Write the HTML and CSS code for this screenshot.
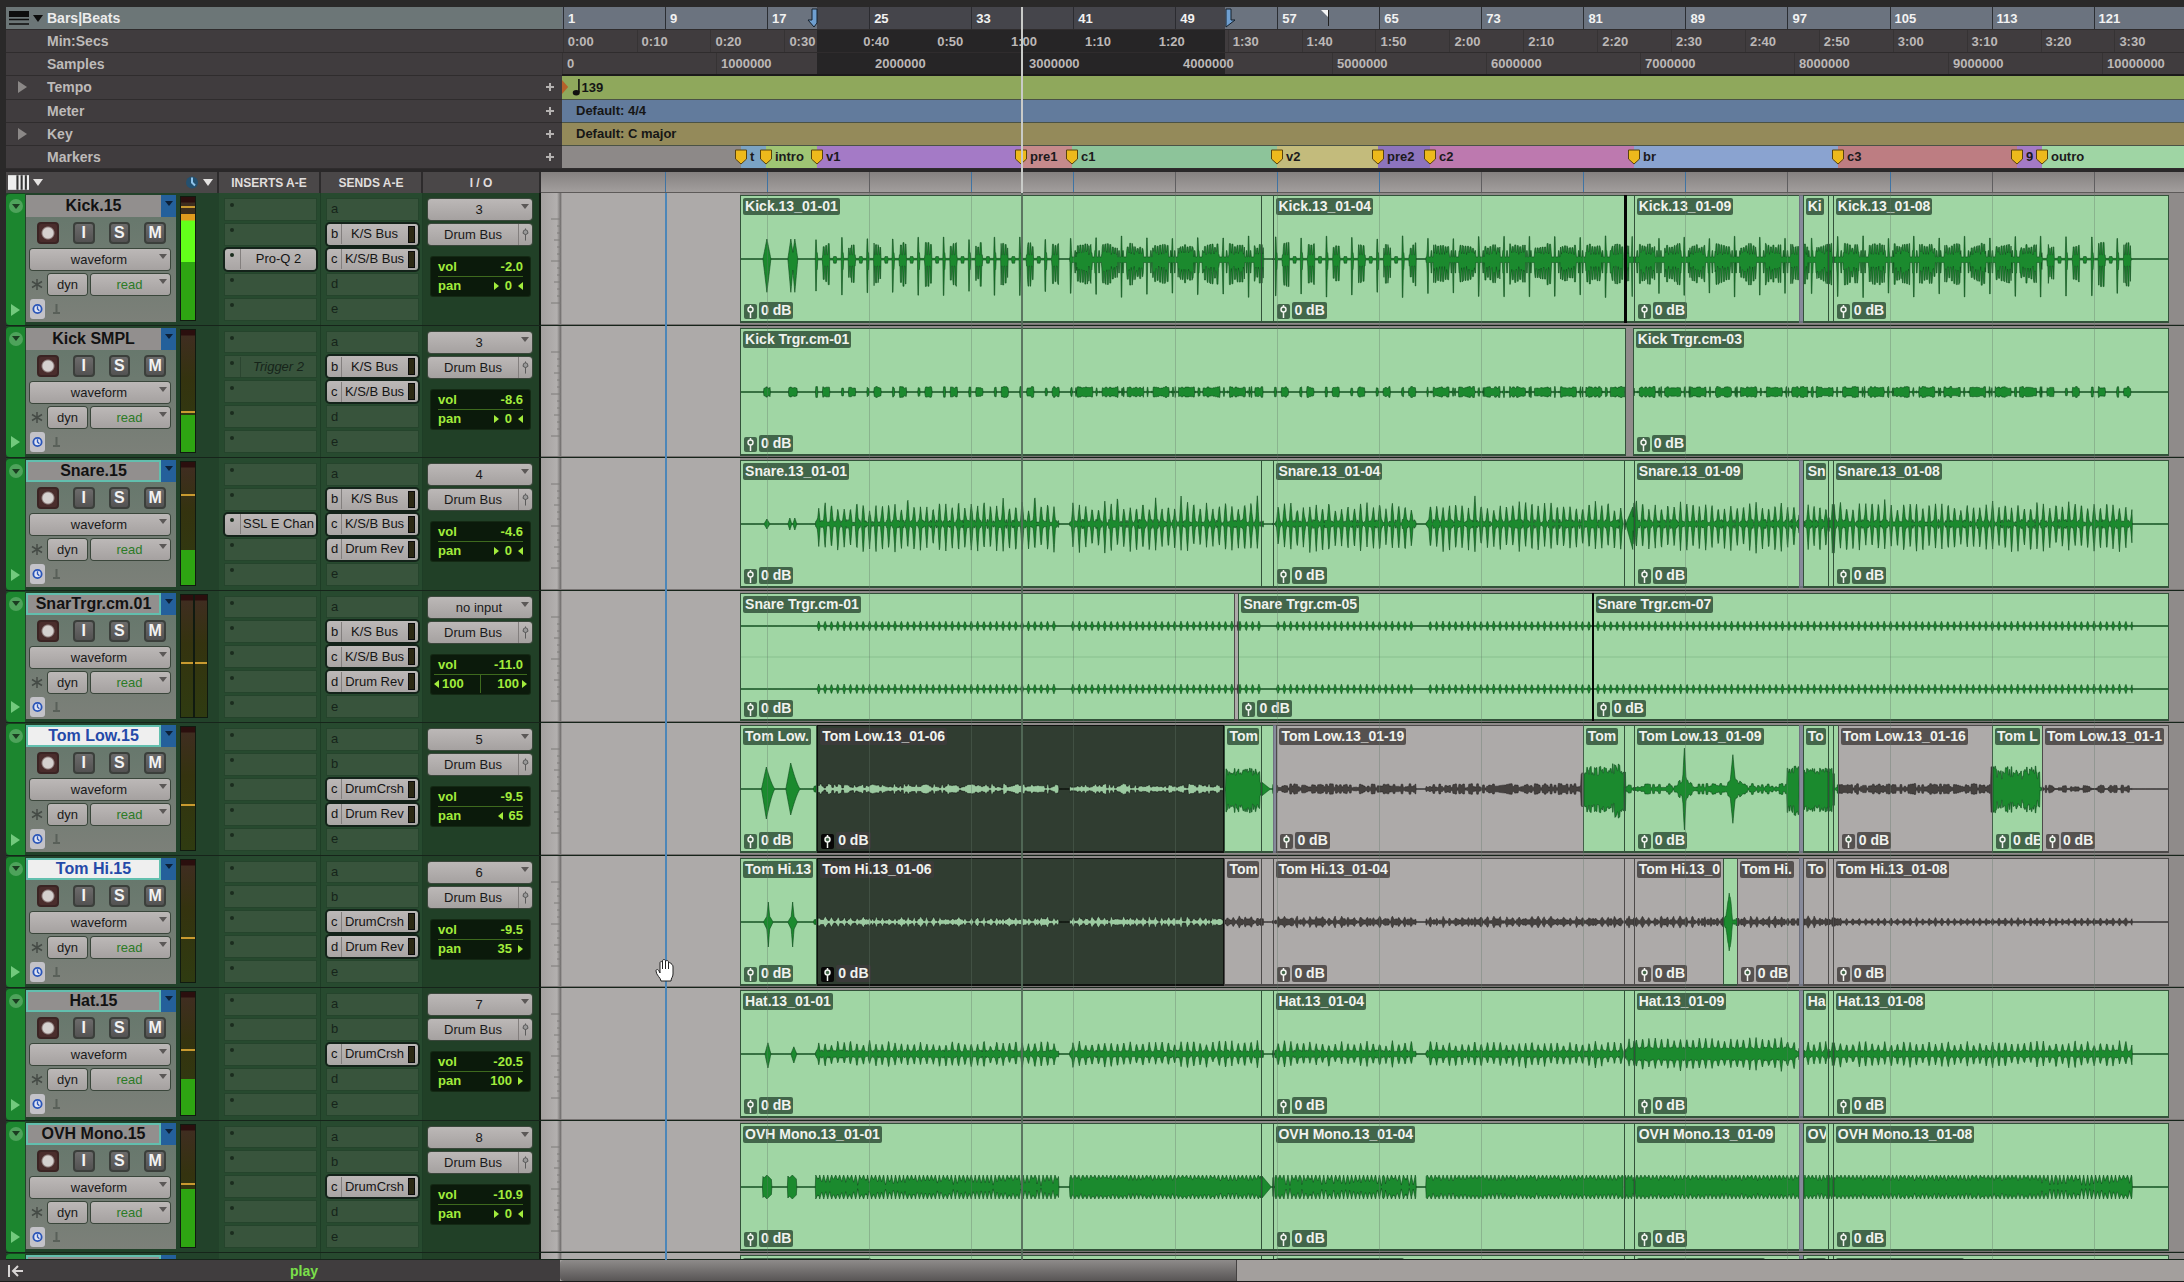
FILE: index.html
```
<!DOCTYPE html>
<html lang="en">
<head>
    <meta charset="UTF-8">
    <meta name="viewport" content="width=device-width, initial-scale=1.0">
    <title>Edit Window</title>
    <link rel="stylesheet" href="styles.css">
</head>
<body>
    <!-- Rulers -->
    <section class="rulers">
        <div class="ruler-names">
            <div class="ruler-name main">
                <svg class="list-icon" viewBox="0 0 20 14"><rect width="20" height="6" fill="#0d0d0d"/><path d="M0 8.5h20M0 13h20" stroke="#0d0d0d" stroke-width="1.5"/></svg>
                <span class="arrow-down black"></span>
                <span class="text">Bars|Beats</span>
            </div>
            <div class="ruler-name"><span class="text">Min:Secs</span></div>
            <div class="ruler-name"><span class="text">Samples</span></div>
            <div class="ruler-name"><span class="arrow-right"></span><span class="text">Tempo</span><button class="plus" aria-label="Add tempo change"></button></div>
            <div class="ruler-name"><span class="text">Meter</span><button class="plus" aria-label="Add meter change"></button></div>
            <div class="ruler-name"><span class="arrow-right"></span><span class="text">Key</span><button class="plus" aria-label="Add key change"></button></div>
            <div class="ruler-name"><span class="text">Markers</span><button class="plus" aria-label="Add marker"></button></div>
        </div>
        <div class="ruler-lanes">
            <div class="ruler bars" id="bars"></div>
            <div class="ruler" id="secs"></div>
            <div class="ruler samples" id="samples"></div>
            <div class="ruler tempo">
                <svg class="tempo-start" viewBox="0 0 8 16"><path d="M0 0l7 8-7 8z" fill="#b5602a"/></svg>
                <svg class="note" viewBox="0 0 8 16"><path d="M6.5 0v12.5" stroke="#111" stroke-width="1.5"/><ellipse cx="4" cy="13" rx="3.3" ry="2.6" fill="#111"/></svg>139
            </div>
            <div class="ruler meter-ruler">Default: 4/4</div>
            <div class="ruler key">Default: C major</div>
            <div class="ruler markers" id="markers"></div>
        </div>
    </section>

    <!-- Column titles -->
    <header class="columns">
        <div class="view-cell">
            <button class="view-button" aria-label="Edit window views">
                <svg viewBox="0 0 20 14"><rect width="20" height="14" fill="#eee"/><path d="M9 0v14M13 0v14M17 0v14" stroke="#333" stroke-width="2"/></svg>
                <span class="arrow-down"></span>
            </button>
            <button class="view-button" aria-label="Timebase">
                <svg class="clock-big" viewBox="0 0 14 14"><circle cx="7" cy="7" r="6" fill="#24506f"/><path d="M7 2v5l3 3" stroke="#8fc3ea" stroke-width="2" fill="none"/></svg>
                <span class="arrow-down"></span>
            </button>
        </div>
        <div>INSERTS A-E</div>
        <div>SENDS A-E</div>
        <div>I / O</div>
        <div class="lane-top" id="lane-top"></div>
    </header>

    <main class="tracks" id="tracks"></main>

    <footer>
        <div class="status">
            <svg viewBox="0 0 16 12"><path d="M1 0v12M15 6H5M10 1L5 6l5 5" stroke="#d8d5d4" stroke-width="2" fill="none"/></svg>
            <span>play</span>
        </div>
        <div class="scroll"><div class="thumb"></div></div>
    </footer>

    <script src="tracks.js"></script>
</body>
</html>
```
FILE: styles.css
```
* {
    box-sizing: border-box;
}
body {
    margin: 0;
    height: 100vh;
    display: flex;
    flex-direction: column;
    overflow: hidden;
    background: #2a2929;
    font-family: "Liberation Sans", Arial, sans-serif;
    font-size: 13px;
    padding-top: 7px;
}
button, select {
    font: inherit;
    color: inherit;
    border: 0;
    margin: 0;
    padding: 0;
    background: none;
    appearance: none;
}
svg {
    display: block;
}

/* small shared arrows */
.arrow-down {
    border: 5px solid transparent;
    border-top: 7px solid #e4e2e1;
    border-bottom: 0;
}
.arrow-down.black {
    border-top-color: #0d0d0d;
}
.arrow-right {
    border: 6px solid transparent;
    border-left: 9px solid #8b8887;
    border-right: 0;
}

/* rulers */
.rulers {
    display: grid;
    grid-template-columns: 562px 1fr;
    height: 165px;
    flex: none;
    border-bottom: 3px solid #2a2829;
}
.ruler-names, .ruler-lanes {
    display: grid;
    grid-template-rows: repeat(7, 1fr);
}
.ruler-names {
    padding-left: 6px;
}
.ruler-name {
    display: flex;
    align-items: center;
    position: relative;
    background: #403c3e;
    border-bottom: 1px solid #2f2c2d;
    color: #bdbab9;
    font-size: 14px;
    font-weight: bold;
}
.ruler-name.main {
    background: #6c7677;
    color: #ececec;
}
.ruler-name .text {
    position: absolute;
    left: 41px;
}
.ruler-name .list-icon {
    width: 20px;
    margin: 0 4px 0 3px;
}
.ruler-name .arrow-right {
    margin-left: 12px;
}
.plus {
    width: 8px;
    height: 8px;
    margin: 0 8px 0 auto;
    background:
        linear-gradient(#b5b2b1, #b5b2b1) center / 8px 2px no-repeat,
        linear-gradient(#b5b2b1, #b5b2b1) center / 2px 8px no-repeat;
}
.ruler-lanes {
    position: relative;
}
.ruler {
    position: relative;
    overflow: hidden;
    display: flex;
    align-items: center;
    background: #403c3e;
    border-bottom: 1px solid #2f2c2d;
    color: #bcb8b7;
    font-size: 13px;
    font-weight: bold;
}
.bars {
    background: #6b737f;
    color: #f2f2f2;
}
.samples {
    border-bottom: 2px solid #1b1a1a;
}
.tick {
    position: absolute;
    top: 0;
    bottom: 0;
    padding-left: 4px;
    display: flex;
    align-items: center;
    border-left: 1px solid #363334;
}
.bars .tick {
    border-left-color: #2b2e33;
}
.shade {
    position: absolute;
    top: 0;
    bottom: 0;
    background: #262526;
}
.bars .shade {
    background: #45454b;
}
.ruler .in {
    border-left-color: transparent;
}
.bars .in {
    border-left-color: #2b2b30;
}
.tempo, .meter-ruler, .key {
    color: #161616;
    padding-left: 14px;
    border-bottom: 1px solid #4a5245;
}
.tempo {
    background: #8fa85c;
}
.meter-ruler {
    background: #627b9c;
}
.key {
    background: #948a5a;
}
.tempo-start {
    position: absolute;
    left: 0;
    height: 14px;
}
.note {
    height: 17px;
    margin-right: 1px;
    margin-left: -4px;
}
.markers {
    background: #8d8988;
}
.marker {
    position: absolute;
    top: 0;
    bottom: 0;
    display: flex;
    align-items: center;
    color: #1c1a1c;
    padding-left: 9px;
}
.marker-pin {
    position: absolute;
    width: 13px;
    height: 16px;
    z-index: 1;
    transform: translateX(-50%);
}
.range-arrow, .flag {
    position: absolute;
    top: 1px;
    height: 20px;
    width: 11px;
}
.flag {
    top: 3px;
    height: 16px;
    width: 8px;
}
.range-start {
    transform: translateX(-100%);
}
.playhead-top {
    position: absolute;
    top: 0;
    bottom: -24px;
    width: 2px;
    background: #c9cbc8;
    z-index: 3;
}

/* column titles */
.columns {
    display: grid;
    grid-template-columns: 213px 102px 102px 118px 1fr;
    height: 21px;
    flex: none;
    margin-left: 6px;
    background: #4a4748;
    color: #e0dedd;
    font-size: 12px;
    font-weight: bold;
}
.columns > div {
    display: flex;
    align-items: center;
    justify-content: center;
    border-right: 2px solid #2d2b2c;
}
.columns .view-cell {
    justify-content: space-between;
    padding: 0 4px 0 2px;
}
.view-button {
    display: flex;
    align-items: center;
    gap: 4px;
}
.view-button svg {
    width: 21px;
    height: 15px;
}
.view-button .clock-big {
    width: 14px;
}
.columns .lane-top {
    position: relative;
    border: 0;
    background: linear-gradient(#858180, #a29e9d);
    border-bottom: 1px solid #5d5a59;
}
.lane-top i {
    position: absolute;
    top: 0;
    bottom: 0;
    width: 1px;
    background: #605e60;
}
.lane-top i.blue {
    background: #3f73a3;
}

/* tracks */
.tracks {
    flex: 1;
    min-height: 0;
    display: grid;
    grid-template-rows: repeat(8, 1fr) 7px;
    position: relative;
    background: #2a2929;
    padding-left: 6px;
}
.track {
    display: grid;
    grid-template-columns: 20px 150px 43px 102px 102px 118px 20px 1fr;
    background: #22422a;
    min-height: 0;
    overflow: hidden;
    border-bottom: 1px solid #16241a;
}
.strip {
    display: flex;
    flex-direction: column;
    justify-content: space-between;
    align-items: center;
    margin-right: 1px;
    background: #1c862f;
    border-radius: 4px 0 0 4px;
    padding: 5px 0 9px;
    border-top: 1px solid #14451d;
}
.strip button {
    width: 14px;
    height: 14px;
    border-radius: 50%;
    background: #4ea35b;
    display: grid;
    place-items: center;
}
.strip .arrow-down {
    border-width: 5px 4px 0;
    border-top-color: #1b3d21;
}
.strip .arrow-right {
    border-left-color: #72c97d;
}
.controls {
    background: linear-gradient(#63766a, #7c8079);
    margin-top: 2px;
    margin-bottom: 3px;
    display: flex;
    flex-direction: column;
}
.name-row {
    display: flex;
    height: 22px;
}
.name {
    flex: 1;
    background: #928f8e;
    color: #121212;
    font-size: 16px;
    font-weight: bold;
    text-align: center;
    line-height: 22px;
    white-space: nowrap;
}
.grouped .name {
    box-shadow: inset 0 0 0 2px #62bfae;
}
.selected .name {
    background: #efefef;
    color: #2449a8;
}
.name-menu {
    width: 15px;
    background: #24609b;
    display: flex;
    justify-content: center;
    padding-top: 6px;
}
.name-menu .arrow-down {
    border-width: 5px 4px 0;
    border-top-color: #0d2038;
}
.buttons {
    display: flex;
    gap: 14px;
    padding: 5px 10px 5px 11px;
}
.buttons button {
    width: 22px;
    height: 22px;
    border-radius: 4px;
    background: linear-gradient(#6c6b6b, #535252);
    border: 2px solid #3b3f3b;
    color: #f2f2f2;
    font-size: 16px;
    font-weight: bold;
    line-height: 18px;
    text-align: center;
}
.buttons .rec {
    background: radial-gradient(circle, #d5d1cf 5px, #4a2d2c 7px);
    border-color: #3a2423;
}
.box {
    background: linear-gradient(#bcb8b7, #a5a1a0);
    color: #191919;
    border-radius: 3px;
    box-shadow: 0 0 0 1px #3a463b;
    height: 21px;
    text-align: center;
}
.drop {
    position: relative;
    display: block;
}
.drop select {
    width: 100%;
    height: 100%;
    padding: 0 12px 0 10px;
    text-align: center;
    text-align-last: center;
}
.drop::after {
    content: "";
    position: absolute;
    top: 5px;
    right: 3px;
    border: 4px solid transparent;
    border-top: 5px solid #5b5857;
    border-bottom: 0;
}
.view-drop {
    margin: 0 6px 0 4px;
}
.auto {
    display: flex;
    gap: 4px;
    margin: 4px 6px 4px 4px;
}
.auto svg {
    width: 14px;
    height: 21px;
}
.auto .dyn {
    width: 39px;
}
.auto .drop {
    flex: 1;
    color: #2c7a27;
}
.base {
    display: flex;
    align-items: center;
    gap: 7px;
    padding-left: 4px;
}
.base button {
    width: 15px;
    height: 20px;
    border-radius: 3px;
    background: #c3c2c8;
    padding-left: 2px;
}
.base button svg {
    width: 11px;
    height: 12px;
}
.base > svg {
    width: 9px;
    height: 10px;
    opacity: 0.6;
}
.meters {
    display: flex;
    gap: 0;
    padding: 3px 0 4px 4px;
}
.meter {
    position: relative;
    width: 16px;
    background: linear-gradient(#2b0f0e 0 5px, #3f2d20 6px, #34330f 40%, #2f3b11);
    border: 1px solid #101a10;
}
.stereo .meter {
    width: 14px;
}
.meter i {
    position: absolute;
    left: 0;
    right: 0;
    bottom: 0;
}
.meter .low {
    background: #2ea512;
}
.meter .high {
    background: linear-gradient(#e09b1e 0 6px, #63ff1a 7px);
}
.meter .peak {
    height: 2px;
    bottom: auto;
    background: #c99a30;
}
.slots {
    display: flex;
    flex-direction: column;
    gap: 4px;
    padding: 6px 4px 5px 6px;
    background: #274a2f;
    border-right: 1px solid #1e3d26;
}
.slot {
    flex: 1;
    display: flex;
    align-items: center;
    background: #38543c;
    color: #16241a;
    box-shadow: 0 0 0 1px #25442c;
    text-align: left;
}
.slot .key-letter {
    width: 14px;
    padding-left: 4px;
    line-height: 20px;
}
.slot .dot {
    width: 4px;
    height: 4px;
    border-radius: 50%;
    background: #1b2c1e;
    margin: 0 6px 8px 5px;
}
.slot.on {
    background: linear-gradient(#bcb8b7, #a9a5a4);
    color: #141414;
    border-radius: 3px;
    box-shadow: 0 0 0 2px #14231a;
}
.slot .label {
    flex: 1;
    text-align: center;
    border-left: 1px solid #837f7e;
    line-height: 20px;
    white-space: nowrap;
}
.slot.off .label {
    font-style: italic;
    border-left-color: #2b4530;
}
.slot .level {
    width: 7px;
    height: 17px;
    margin: 0 3px 0 1px;
    background: #2c2914;
    border: 1px solid #0d0d0d;
}
.io {
    display: flex;
    flex-direction: column;
    gap: 4px;
    padding: 6px 7px 0 5px;
    background: #214027;
    border-right: 2px solid #0f170f;
}
.io .box {
    flex: none;
}
.out {
    display: flex;
    align-items: center;
}
.out span {
    flex: 1;
}
.out svg {
    width: 14px;
    height: 21px;
    border-left: 1px solid #837f7e;
}
.readout {
    margin: 8px 2px 0 3px;
    background: #0b1a0b;
    color: #a2ec3c;
    font-weight: bold;
    border-radius: 2px;
    padding: 1px 7px;
    box-shadow: 0 0 0 1px #142914;
}
.readout div {
    display: flex;
    align-items: center;
    gap: 6px;
    line-height: 18px;
}
.readout div + div {
    border-top: 1px solid #3e6a1e;
}
.readout .first {
    margin-right: auto;
}
.readout .side {
    flex: 1;
    display: flex;
    align-items: center;
    gap: 3px;
}
.readout .side + .side {
    justify-content: flex-end;
    border-left: 1px solid #3e6a1e;
}
.readout .pair {
    gap: 0;
    margin: 0 -4px;
}
.readout .l, .readout .r {
    border: 4px solid transparent;
}
.readout .l {
    border-right: 5px solid #a2ec3c;
    border-left: 0;
}
.readout .r {
    border-left: 5px solid #a2ec3c;
    border-right: 0;
}
.scale {
    position: relative;
    background: linear-gradient(90deg, #a4a09f, #b3b0af 80%, #6f6c6b);
    border-bottom: 1px solid #777372;
}
.scale svg {
    width: 20px;
    height: 128px;
}
.lane {
    position: relative;
    background: linear-gradient(90deg, #adaaa9 11%, #8f8b8a 11%);
    box-shadow: inset 1px 0 #989594;
    border-bottom: 1px solid #777372;
}
.grid {
    position: absolute;
    top: 0;
    bottom: 0;
    right: 0;
    left: 562px;
    pointer-events: none;
}
.grid i {
    position: absolute;
    top: 0;
    bottom: 0;
    width: 1px;
    background: rgba(98, 118, 104, 0.35);
}
.grid i.cursor {
    background: #4c86b8;
    width: 2px;
}
.grid i.playhead {
    background: rgba(84, 108, 90, 0.9);
    width: 2px;
}

/* clips */
.clip {
    position: absolute;
    top: 2px;
    height: 128px;
    overflow: hidden;
    background: #a0d6a4;
    border: 1px solid #33523a;
    border-bottom-width: 2px;
}
.clip.muted {
    background: #adaaa9;
    border-color: #4d4a4a;
}
.clip.dark {
    background: #303d31;
    border-color: #0f120f;
}
.clip.bar {
    background: #86899a;
    border-color: #6f7280;
}
.clip.edge {
    background: #050505;
    border-color: #050505;
}
.clip .wave {
    position: absolute;
    top: 0;
    left: 0;
    width: 100%;
    height: 125px;
}
.wave path {
    fill: #1b8a2e;
    stroke: #0b4719;
    stroke-width: 0.6;
}
.wave line {
    stroke: #2d6b3a;
}
.muted .wave path {
    fill: #45413f;
    stroke: #2b2929;
}
.muted .wave line {
    stroke: #555252;
}
.dark .wave path {
    fill: #9ccaa1;
    stroke: #141a14;
}
.dark .wave line {
    stroke: #0f140f;
}
.clip-name, .gain {
    position: absolute;
    left: 2px;
    right: 2px;
    display: flex;
    color: #f0f2ee;
    font-size: 14px;
    font-weight: bold;
    line-height: 17px;
    white-space: nowrap;
    overflow: hidden;
}
.clip-name {
    top: 2px;
}
.gain {
    bottom: 2px;
    left: 3px;
    gap: 2px;
}
.clip-name span, .gain span {
    background: #42664a;
    border-radius: 2px;
    padding: 0 2px;
    min-width: 0;
    overflow: hidden;
}
.clip-name .blank {
    width: 128px;
    height: 17px;
}
.gain svg {
    width: 13px;
    height: 15px;
    margin-top: 2px;
    background: #42664a;
    border-radius: 2px;
    flex: none;
}
.muted .clip-name span, .muted .gain span, .muted .gain svg {
    background: #555150;
}
.dark .clip-name span, .dark .gain span {
    background: #3b3b3a;
}
.dark .gain svg {
    background: #070707;
}
.hand {
    position: absolute;
    width: 20px;
    height: 25px;
    top: 765px;
    transform: translateX(-50%);
}

/* footer */
footer {
    display: grid;
    grid-template-columns: 560px 1fr;
    height: 22px;
    flex: none;
    border-bottom: 1px solid #1d1c1c;
}
.status {
    display: flex;
    align-items: center;
    background: #403d3e;
    color: #7be04a;
    font-size: 14px;
    font-weight: bold;
    padding-left: 8px;
}
.status svg {
    width: 16px;
    height: 12px;
}
.status span {
    margin-left: 266px;
}
.scroll {
    background: #a39f9d;
}
.thumb {
    width: 41.7%;
    height: 100%;
    background: linear-gradient(#8e8b8a, #585555);
    border-right: 1px solid #444141;
    border-radius: 4px 0 0 4px;
}
```
FILE: tracks.js
```
// timeline geometry: bar 1 sits at 563, one bar is 12.755 wide
const START = 562;
const WIDTH = 1622;
const BAR = 12.755;

const pct = x => ((x - START) / WIDTH * 100).toFixed(3) + '%';
const wide = w => (w / WIDTH * 100).toFixed(3) + '%';
const barX = n => 563 + (n - 1) * BAR;

// ---------- rulers ----------
const SEL = [817, 1225];
const PLAY = 1021;

function ticks(id, list) {
    const shade = `<div class="shade" style="left:${pct(SEL[0])};width:${wide(SEL[1] - SEL[0])}"></div>`;
    document.getElementById(id).innerHTML = shade + list.map(([x, t]) =>
        `<span class="tick${x > SEL[0] && x < SEL[1] ? ' in' : ''}" style="left:${pct(x)}">${t}</span>`).join('');
}

const bars = [];
for (let n = 1; n <= 121; n += 8) bars.push([barX(n), n]);
ticks('bars', bars);

const secs = [];
for (let s = 0; s <= 210; s += 10) {
    secs.push([562.7 + s * 7.389, Math.floor(s / 60) + ':' + String(s % 60).padStart(2, '0')]);
}
ticks('secs', secs);

const samples = [];
for (let n = 0; n <= 10; n++) samples.push([562 + n * 154, n * 1000000]);
ticks('samples', samples);

document.getElementById('bars').innerHTML +=
    `<svg class="range-arrow range-start" viewBox="0 0 11 20" style="left:${pct(818)}"><path d="M5 1v11H1l6 7 3-4V1z" fill="#6f9fd0" stroke="#15202c"/></svg>
     <svg class="range-arrow" viewBox="0 0 11 20" style="left:${pct(1225)}"><path d="M1 1v18l9-7H6V1z" fill="#6f9fd0" stroke="#15202c"/></svg>
     <svg class="flag" viewBox="0 0 8 16" style="left:${pct(1321)}"><path d="M0 0h7v7z" fill="#f4f4f4"/><path d="M7.5 0v16" stroke="#222"/></svg>`;

const markers = [
    [741, 't', '#7ba3c4'], [766, 'intro', '#9fc574'], [817, 'v1', '#a47ac6'], [1021, 'pre1', '#c68a8c'],
    [1072, 'c1', '#8dc49a'], [1277, 'v2', '#c3bb7c'], [1378, 'pre2', '#8d74bd'], [1430, 'c2', '#bd79af'],
    [1634, 'br', '#8aa3d0'], [1838, 'c3', '#bd7d82'], [2017, '9', '#a47ac6'], [2042, 'outro', '#9fd5a4']
];
document.getElementById('markers').innerHTML = markers.map(([x, t, c], i) => {
    const end = i < markers.length - 1 ? markers[i + 1][0] : START + WIDTH;
    return `<span class="marker" style="left:${pct(x)};width:${wide(end - x)};background:${c}">${t}</span>
        <svg class="marker-pin" viewBox="0 0 13 16" style="left:${pct(x)}"><path d="M1 1h11v9l-5.5 5L1 10z" fill="#edb91c" stroke="#5a430c"/></svg>`;
}).join('');

document.querySelector('.ruler-lanes').insertAdjacentHTML('beforeend',
    `<div class="playhead-top" style="left:${pct(PLAY)}"></div>`);

// the strip above the lanes also covers the 20px scale
const blueBars = [9, 17, 33, 41, 57, 65, 81, 89, 105];
document.getElementById('lane-top').innerHTML = bars.slice(1).map(([x, n]) =>
    `<i class="${blueBars.includes(n) ? 'blue' : ''}" style="left:${((x - 541) / (WIDTH + 21) * 100).toFixed(3)}%"></i>`).join('');

// ---------- waveforms ----------
function rnd(i, s) {
    const v = Math.sin(i * 12.9898 + s * 78.233) * 43758.5453;
    return v - Math.floor(v);
}

function part(x) {
    if (x < 816) return 'intro';
    if (x < 1060) return 'sparse';
    if (x < 1071) return 'none';
    if (x < 1264) return 'dense';
    if (x < 1275) return 'none';
    if (x < 1417) return 'sparse';
    if (x < 1427) return 'none';
    if (x < 2042) return 'dense';
    if (x < 2133) return 'sparse';
    return 'none';
}

const phase = (x, step) => (((x - 816) % step) + step) % step;
const near = (x, c, w) => Math.max(0, 1 - Math.abs(x - c) / w);
const inside = (x, a, b) => x >= a && x < b;

function kickLevel(x) {
    const p = part(x), d = phase(x, BAR * 2), k = Math.floor(x / 3);
    if (p === 'none') return 0;
    if (p === 'intro') return Math.max(near(x, 767, 4), near(x, 791, 3), near(x, 795, 3)) * 0.95;
    if (p === 'sparse') {
        if (d < 1) return 0.9 + rnd(k, 1) * 0.2;
        if (d < 2) return 0.3;
        if (d > 7 && d < 14) return Math.floor(x * 2) % 5 < 2 ? 0.2 : 0.5 + rnd(k, 1) * 0.3;
        return d > 18 && d < 21 ? 0.12 : 0.03;
    }
    if (d < 1) return 0.95 + rnd(k, 1) * 0.15;
    if (d > 6 && d < 22) return Math.floor(x * 2) % 5 < 2 ? 0.2 + rnd(x, 1) * 0.2 : 0.5 + rnd(k, 2) * 0.25;
    return Math.floor(x) % 4 < 1 ? 0.4 : 0.1;
}

function hit(x) {
    const d = phase(x - 3, BAR / 2);
    const e = Math.min(d, BAR / 2 - d);
    return Math.max(0, 1 - e / 1.6);
}

// each one gives the height above and below the centre line
const waves = {
    kick(x) {
        const a = kickLevel(x);
        return [a * 21, a * 35];
    },
    smpl(x) {
        const a = kickLevel(x), d = phase(x, BAR * 2);
        const bead = part(x) === 'dense' && (d > 22 || inside(d, 3, 5)) ? 0.2 : 1;
        const h = a > 0.18 ? (3.5 + rnd(Math.floor(x / 2), 2) * 2) * bead : 0;
        return [h, h];
    },
    snare(x) {
        const p = part(x);
        if (p === 'intro') {
            const a = near(x, 767, 3) * 5 + Math.max(near(x, 790, 2), near(x, 795, 2)) * 6;
            return [a, a];
        }
        if (inside(x, 1625, 1634)) return [(x - 1625) * 2, (x - 1625) * 3];
        if (p === 'none') return [0, 0];
        const k = Math.round((x - 819) / (BAR / 2)), h = hit(x);
        const base = 1 + rnd(Math.floor(x), 3) * 3.5;
        return [base + h * (12 + rnd(k, 4) * 8 + (rnd(k, 9) > 0.92 ? 8 : 0)), base + h * (20 + rnd(k, 5) * 6)];
    },
    trgr(x) {
        const p = part(x);
        const h = p === 'intro' || p === 'none' ? 0 : hit(x) * 5;
        return [h, h];
    },
    low(x) {
        const r = rnd(Math.floor(x), 6), p = part(x);
        if (x < 816) {
            const a = x < 767 ? near(x, 767, 5) : near(x, 767, 9) ** 1.4;
            const b = x < 792 ? near(x, 792, 5) : near(x, 792, 10) ** 1.4;
            return [a * 22 + b * 26, a * 30 + b * 26];
        }
        if (inside(x, 1226, 1262)) return [12 + r * 9, 13 + r * 11];
        if (inside(x, 1583, 1625)) return [12 + r * 11 + (x > 1610 ? 3 : 0), 14 + r * 10 + (x > 1615 ? 6 : 0)];
        if (inside(x, 1262, 1272)) return [(1272 - x) / 1.5, (1272 - x) / 1.5];
        if (inside(x, 1788, 1800)) return [13 + r * 11, 12 + r * 16];
        if (inside(x, 1803, 1834)) return [15 + r * 6, 16 + r * 7];
        if (inside(x, 1992, 2041)) return [10 + r * 13, 11 + r * 13];
        if (p === 'none') return [0, 0];
        const spike = Math.max(near(x, 1684, 2) * 38, near(x, 1684, 9) * 7) + Math.max(near(x, 1733, 3) * 30, near(x, 1735, 9) * 7);
        const gap = x > 2042 && phase(x, BAR) < 4 ? 0.2 : 1;
        const h = (1 + rnd(Math.floor(x / 2), 6) * 4.5) * gap * (x > 2042 ? 0.7 : 1);
        return [h + spike, h + spike];
    },
    hi(x) {
        const r = rnd(Math.floor(x / 2), 7), p = part(x);
        if (x < 816) {
            const a = Math.max(near(x, 769, 2), near(x, 769, 5) * 0.4, near(x, 794, 2), near(x, 794, 5) * 0.4);
            return [a * 20, a * 25];
        }
        if (p === 'none') return [0, 0];
        const spike = near(x, 1729, 4) * 28;
        const h = x > 1838 ? 0.5 + hit(x) * 3 + r : 0.8 + hit(x) * 3 + r * 2.5;
        return [h + spike, h + spike];
    },
    hat(x) {
        const r = rnd(Math.floor(x), 8), p = part(x);
        if (x < 816) {
            const a = Math.max(near(x, 768, 3) * 14, near(x, 794, 3) * 9);
            return [a * 0.8, a];
        }
        if (p === 'none') return [0, 0];
        const k = Math.round((x - 819) / (BAR / 2));
        const base = inside(x, 1626, 1796) ? 5 : 2;
        return [base + r * 2 + hit(x) * (6 + rnd(k, 3) * 5), base + r * 2 + hit(x) * (6 + rnd(k, 4) * 5)];
    },
    ovh(x) {
        const p = part(x), k = Math.floor(x / 3);
        if (x < 816) {
            const a = inside(x, 763, 772) || inside(x, 788, 797) ? 12 - Math.abs(phase(x, 25.5) - 2) % 5 : 0;
            return [a, a];
        }
        if (inside(x, 1262, 1273)) return [1273 - x, 1273 - x];
        if (p === 'none') return [0, 0];
        const edge = Math.abs(phase(x, 4) - 2) / 2;
        const low = p === 'sparse' ? 1 + rnd(k, 9) * 7 : 6 + rnd(k, 9) * 3;
        const h = low + (12 - low) * edge;
        return [h, h];
    }
};

function wavePath(fn, x0, x1, mid) {
    let top = '', bottom = '';
    for (let x = x0; x <= x1; x += 0.5) {
        const [u, d] = fn(x);
        top += `L${x - x0} ${(mid - u).toFixed(1)}`;
        bottom = `L${x - x0} ${(mid + d).toFixed(1)}` + bottom;
    }
    return `<line x1="0" x2="${x1 - x0}" y1="${mid}" y2="${mid}"/><path d="M0 ${mid}${top}${bottom}Z"/>`;
}

function waveSvg(kind, x0, x1) {
    const mids = kind === 'trgr' ? [32, 95] : [63];
    const split = kind === 'trgr' ? `<line x1="0" x2="${x1 - x0}" y1="63" y2="63" opacity="0.2"/>` : '';
    return `<svg class="wave" viewBox="0 0 ${x1 - x0} 125" preserveAspectRatio="none">${split}${mids.map(m => wavePath(waves[kind], x0, x1, m)).join('')}</svg>`;
}

// ---------- tracks ----------
// clip: [from, to, name, class]
const standard = (n, short) => [
    [741, 1263, n + '-01'], [1262, 1275, ''], [1274, 1625, n + '-04'], [1624, 1635, ''], [1634, 1800, n + '-09'],
    [1799, 1804, '', 'bar'], [1803, 1829, short], [1828, 1834, ''], [1833, 2169, n + '-08']
];

const tracks = [
    {
        name: 'Kick.15', input: '3', wave: 'kick', vol: '-2.0', pan: ['r', '0', 'l'],
        inserts: { 2: 'Pro-Q 2' }, sends: { b: 'K/S Bus', c: 'K/S/B Bus' }, peak: 9, high: [17, 48], low: 64,
        clips: standard('Kick.13_01', 'Ki').concat([[1624, 1627, '', 'edge']])
    },
    {
        name: 'Kick SMPL', input: '3', wave: 'smpl', vol: '-8.6', pan: ['r', '0', 'l'],
        inserts: { 1: 'Trigger 2' }, off: true, sends: { b: 'K/S Bus', c: 'K/S/B Bus' }, peak: 81, low: 85,
        clips: [[741, 1626, 'Kick Trgr.cm-01'], [1633, 2169, 'Kick Trgr.cm-03']]
    },
    {
        name: 'Snare.15', input: '4', wave: 'snare', vol: '-4.6', pan: ['r', '0', 'l'], cls: 'grouped',
        inserts: { 2: 'SSL E Chan' }, sends: { b: 'K/S Bus', c: 'K/S/B Bus', d: 'Drum Rev' }, peak: 32, low: 88,
        clips: standard('Snare.13_01', 'Sn')
    },
    {
        name: 'SnarTrgr.cm.01', input: 'no input', wave: 'trgr', vol: '-11.0', stereo: true, cls: 'grouped',
        inserts: {}, sends: { b: 'K/S Bus', c: 'K/S/B Bus', d: 'Drum Rev' }, peak: 67,
        clips: [[741, 1236, 'Snare Trgr.cm-01'], [1235, 1240, '', 'muted'], [1239, 1594, 'Snare Trgr.cm-05'],
            [1593, 2169, 'Snare Trgr.cm-07'], [1592, 1594, '', 'edge']]
    },
    {
        name: 'Tom Low.15', input: '5', wave: 'low', vol: '-9.5', pan: ['l', '65', ''], cls: 'grouped selected',
        inserts: {}, sends: { c: 'DrumCrsh', d: 'Drum Rev' }, peak: 77,
        clips: [[741, 818, 'Tom Low.'], [818, 1225, 'Tom Low.13_01-06', 'dark'], [1225, 1263, 'Tom'],
            [1262, 1275, ''], [1274, 1278, '', 'bar'], [1277, 1584, 'Tom Low.13_01-19', 'muted'], [1583, 1625, 'Tom'],
            [1624, 1635, ''], [1634, 1800, 'Tom Low.13_01-09'], [1799, 1804, '', 'bar'], [1803, 1829, 'To'],
            [1828, 1834, ''], [1833, 1839, ''], [1838, 1993, 'Tom Low.13_01-16', 'muted'], [1992, 2043, 'Tom L'],
            [2042, 2169, 'Tom Low.13_01-1', 'muted']]
    },
    {
        name: 'Tom Hi.15', input: '6', wave: 'hi', vol: '-9.5', pan: ['', '35', 'r'], cls: 'grouped selected',
        inserts: {}, sends: { c: 'DrumCrsh', d: 'Drum Rev' }, peak: 77,
        clips: [[741, 818, 'Tom Hi.13'], [818, 1225, 'Tom Hi.13_01-06', 'dark'], [1225, 1263, 'Tom', 'muted'],
            [1262, 1275, '', 'muted'], [1274, 1625, 'Tom Hi.13_01-04', 'muted'], [1624, 1635, '', 'muted'],
            [1634, 1724, 'Tom Hi.13_0', 'muted'], [1723, 1738, ''], [1737, 1800, 'Tom Hi.', 'muted'],
            [1799, 1804, '', 'bar'], [1803, 1829, 'To', 'muted'], [1828, 1834, '', 'muted'],
            [1833, 2169, 'Tom Hi.13_01-08', 'muted']]
    },
    {
        name: 'Hat.15', input: '7', wave: 'hat', vol: '-20.5', pan: ['', '100', 'r'], cls: 'grouped',
        inserts: {}, sends: { c: 'DrumCrsh' }, peak: 57, low: 87, clips: standard('Hat.13_01', 'Ha')
    },
    {
        name: 'OVH Mono.15', input: '8', wave: 'ovh', vol: '-10.9', pan: ['r', '0', 'l'], cls: 'grouped',
        inserts: {}, sends: { c: 'DrumCrsh' }, peak: 58, low: 64, clips: standard('OVH Mono.13_01', 'OV')
    }
];

const fader = '<svg viewBox="0 0 13 15"><path d="M6.5 1v13M4 6h5" stroke="#f0f2ee" stroke-width="1.5"/><circle cx="6.5" cy="5.5" r="2.5" fill="#42664a" stroke="#f0f2ee" stroke-width="1.5"/></svg>';
const clock = '<svg viewBox="0 0 12 12"><circle cx="6" cy="6" r="4.5" fill="#dfe4f4" stroke="#2a55b8" stroke-width="2"/><path d="M6 3v3l2 2" stroke="#2a55b8" stroke-width="1.5" fill="none"/></svg>';

function clipHtml(t, [x0, x1, name, cls = '']) {
    const plain = cls === 'bar' || cls === 'edge';
    const gain = name && x1 - x0 > 48;
    return `<div class="clip ${cls}" style="left:${pct(x0)};width:${wide(x1 - x0)}">
        ${plain ? '' : waveSvg(t.wave, x0, x1)}
        ${name ? `<div class="clip-name"><span>${name}</span></div>` : ''}
        ${gain ? `<div class="gain">${fader}<span>0 dB</span></div>` : ''}
    </div>`;
}

function insertSlots(t) {
    return [0, 1, 2, 3, 4].map(i => {
        const n = t.inserts[i];
        const cls = n ? (t.off ? 'off' : 'on') : '';
        return `<button class="slot ${cls}" aria-label="Insert ${'ABCDE'[i]} ${n || ''}"><span class="dot"></span>${n ? `<span class="label">${n}</span>` : ''}</button>`;
    }).join('');
}

function sendSlots(t) {
    return [...'abcde'].map(k => {
        const n = t.sends[k];
        return `<button class="slot ${n ? 'on' : ''}"><span class="key-letter">${k}</span>${n ? `<span class="label">${n}</span><span class="level"></span>` : ''}</button>`;
    }).join('');
}

function meterHtml(t) {
    const one = `<div class="meter">
        ${t.low ? `<i class="low" style="top:${t.low}px"></i>` : ''}
        ${t.high ? `<i class="high" style="top:${t.high[0]}px;height:${t.high[1]}px"></i>` : ''}
        <i class="peak" style="top:${t.peak}px"></i></div>`;
    return t.stereo ? one + one : one;
}

function panHtml(t) {
    if (t.stereo) {
        return '<div class="pair"><span class="side"><i class="l"></i>100</span><span class="side">100<i class="r"></i></span></div>';
    }
    const arrow = d => d ? `<i class="${d}"></i>` : '';
    return `<div><span class="first">pan</span>${arrow(t.pan[0])}<span>${t.pan[1]}</span>${arrow(t.pan[2])}</div>`;
}

function scaleTicks() {
    let d = '';
    for (let i = 0; i <= 12; i++) {
        const len = i % 6 === 0 ? 10 : i % 3 === 0 ? 7 : 4;
        d += `M20 ${26 + i * 7}h-${len}`;
    }
    return `<svg viewBox="0 0 20 128"><path d="${d}" stroke="#7d7a79"/></svg>`;
}

function trackHtml(t) {
    return `<section class="track ${t.cls || ''} ${t.stereo ? 'stereo' : ''}">
        <div class="strip"><button aria-label="Track options"><span class="arrow-down"></span></button><span class="arrow-right"></span></div>
        <div class="controls">
            <div class="name-row"><div class="name">${t.name}</div><button class="name-menu" aria-label="Playlists"><span class="arrow-down"></span></button></div>
            <div class="buttons"><button class="rec" aria-label="Record"></button><button>I</button><button>S</button><button>M</button></div>
            <label class="box drop view-drop"><select aria-label="Track view"><option>waveform</option></select></label>
            <div class="auto">
                <svg viewBox="0 0 14 21"><path d="M7 5v11M2 7.5l10 6M12 7.5l-10 6" stroke="#454b46" stroke-width="1.5"/></svg>
                <button class="box dyn">dyn</button>
                <label class="box drop"><select aria-label="Automation mode"><option>read</option></select></label>
            </div>
            <div class="base"><button aria-label="Timebase">${clock}</button><svg viewBox="0 0 9 10"><path d="M4.5 0v8M1 9h7" stroke="#444c46" stroke-width="2"/></svg></div>
        </div>
        <div class="meters">${meterHtml(t)}</div>
        <div class="slots">${insertSlots(t)}</div>
        <div class="slots">${sendSlots(t)}</div>
        <div class="io">
            <label class="box drop"><select aria-label="Input"><option>${t.input}</option></select></label>
            <button class="box out"><span>Drum Bus</span><svg viewBox="0 0 14 21"><path d="M7 4v13M4 9h6" stroke="#555"/><circle cx="7" cy="8" r="2.5" fill="#999" stroke="#555"/></svg></button>
            <div class="readout"><div><span class="first">vol</span><span>${t.vol}</span></div>${panHtml(t)}</div>
        </div>
        <div class="scale">${scaleTicks()}</div>
        <div class="lane">${t.clips.map(c => clipHtml(t, c)).join('')}</div>
    </section>`;
}

// only the first few pixels of the following track are in view
const nextClips = standard('x', 'x').map(([a, b, n, cls = '']) =>
    `<div class="clip ${cls}" style="left:${pct(a)};width:${wide(b - a)}">${n ? '<div class="clip-name"><span class="blank"></span></div>' : ''}</div>`).join('');
const nextTrack = `<section class="track grouped">
    <div class="strip"></div>
    <div class="controls"><div class="name-row"><div class="name"></div><div class="name-menu"></div></div></div>
    <div></div><div class="slots"></div><div class="slots"></div><div class="io"></div><div class="scale"></div>
    <div class="lane">${nextClips}</div></section>`;

const gridLines = bars.slice(1).map(([x, n]) => `<i class="${n === 9 ? 'cursor' : ''}" style="left:${pct(x)}"></i>`).join('');

document.getElementById('tracks').innerHTML = tracks.map(trackHtml).join('') + nextTrack +
    `<div class="grid">${gridLines}<i class="playhead" style="left:${pct(PLAY)}"></i>
        <svg class="hand" viewBox="0 0 20 25" style="left:${pct(665)}"><path d="M6 23c0-3-5-6-5-10 0-2 2-2 3 0l1 2V5c0-2 2.5-2 2.5 0V3c0-2 3-2 3 0v1c0-2 3-2 3 0v2c0-2 2.5-2 2.5 0 1 0 2 1 2 3v7c0 3-2 4-2 7z" fill="#fff" stroke="#222"/><path d="M7.5 5v6M10.5 4v7M13.5 5v6" stroke="#222"/></svg>
    </div>`;
```
